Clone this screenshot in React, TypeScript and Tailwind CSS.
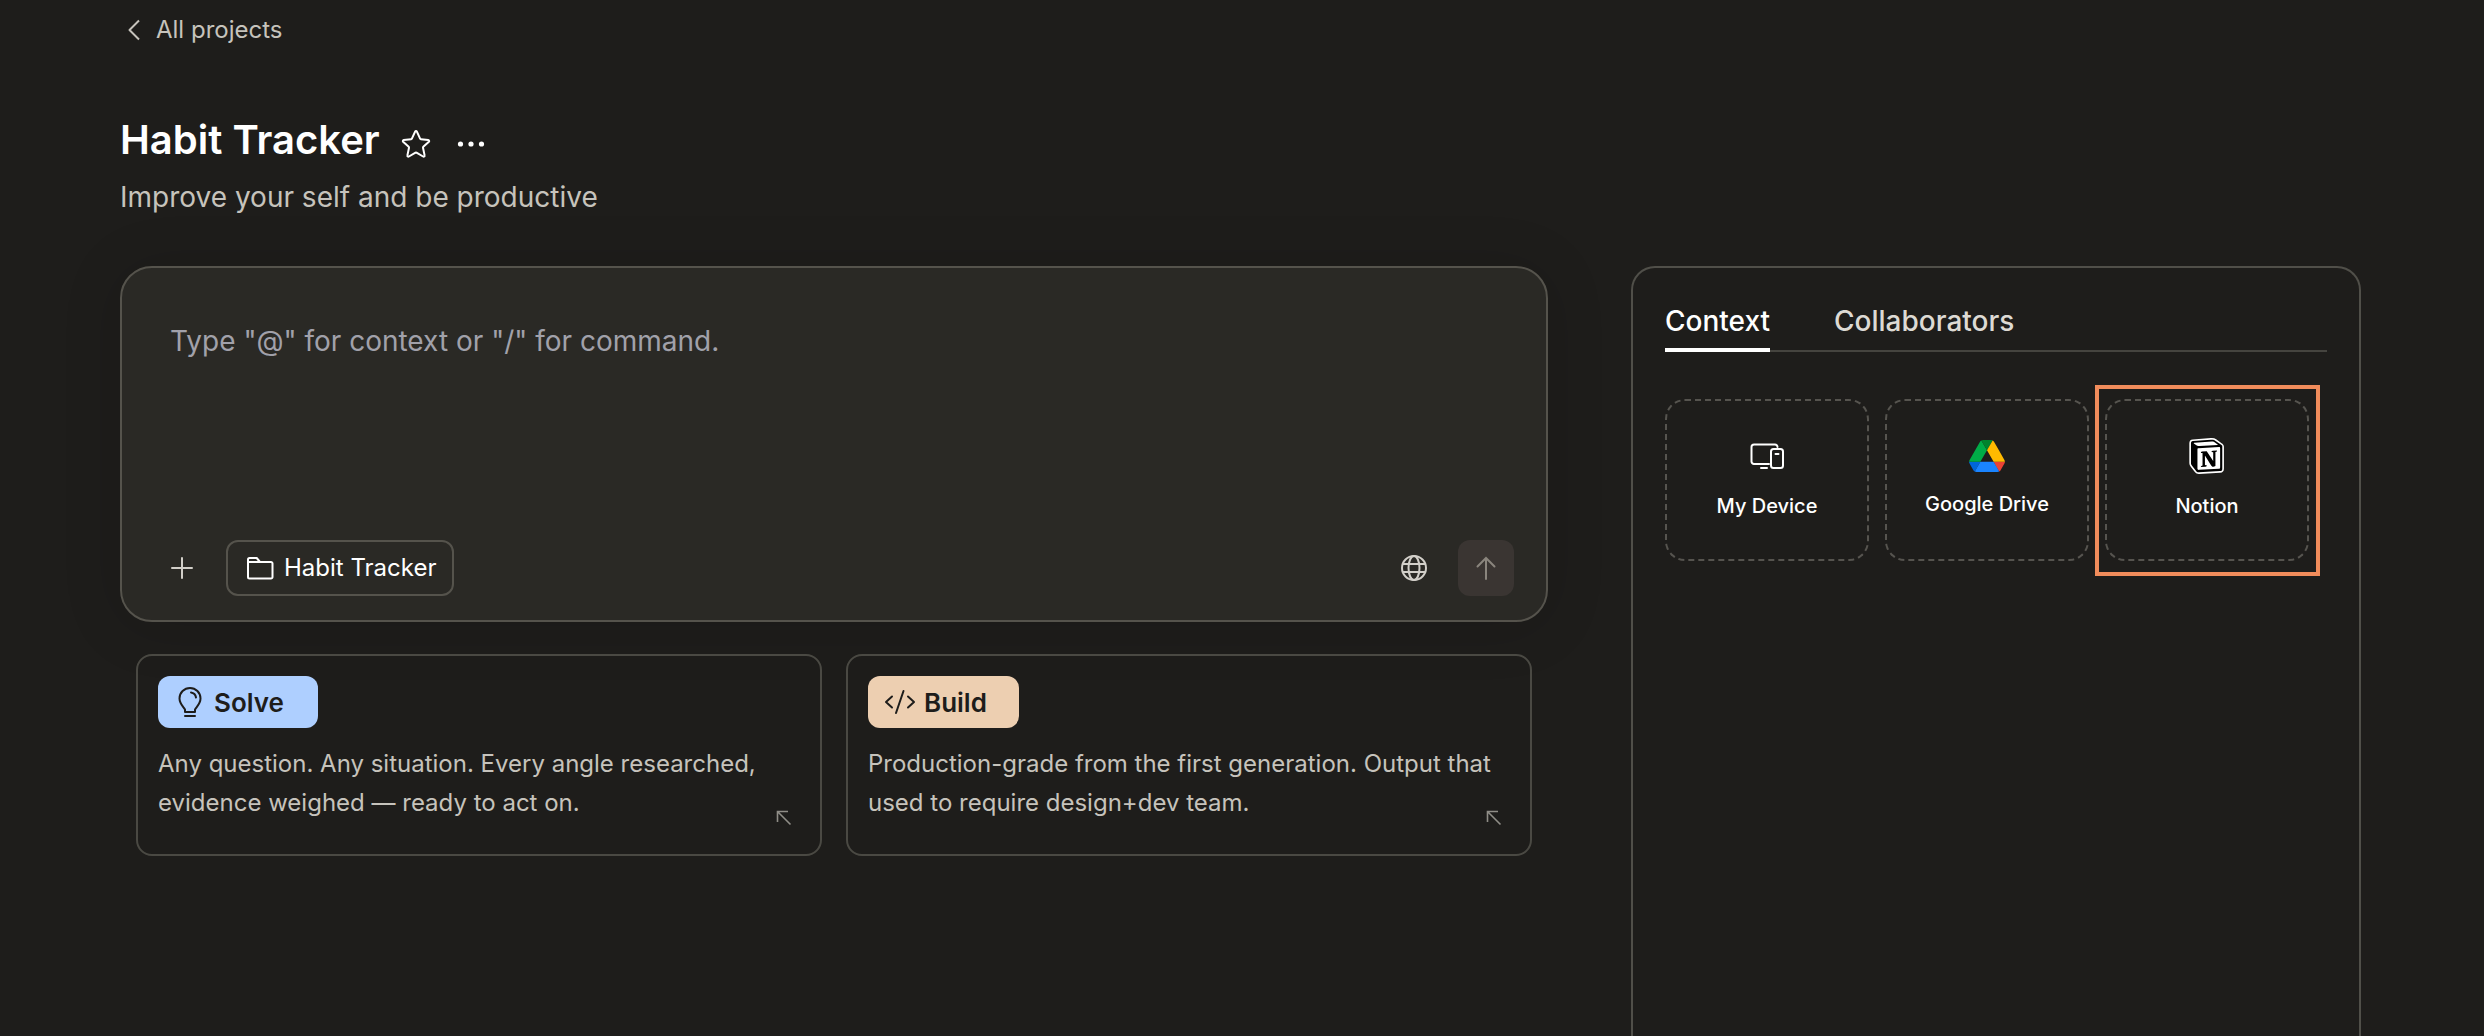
import React from "react";

type IconProps = { className?: string; children: React.ReactNode; box: string; width?: number };

function Line({ className, children, box, width = 2 }: IconProps) {
  return (
    <svg
      viewBox={box}
      className={className}
      fill="none"
      stroke="currentColor"
      strokeWidth={width}
      strokeLinecap="round"
      strokeLinejoin="round"
      aria-hidden="true"
    >
      {children}
    </svg>
  );
}

function ArrowUpLeft() {
  return (
    <Line box="0 0 16 16" width={1.6} className="size-4 text-[#8f8d87]">
      <path d="M1.500 12V1.500H12M1.500 1.500l13 13" strokeLinecap="butt" strokeLinejoin="miter" />
    </Line>
  );
}

function ModeCard({
  title,
  tone,
  icon,
  children,
}: {
  title: string;
  tone: string;
  icon: React.ReactNode;
  children: React.ReactNode;
}) {
  return (
    <button
      type="button"
      className="relative flex h-[202px] flex-col items-start rounded-2xl border-2 border-[#4a4943] p-5 text-left"
    >
      <span className={`flex h-13 items-center rounded-xl text-[26px] font-semibold text-[#1e1d1b] ${tone}`}>
        {icon}
        {title}
      </span>
      <span className="mt-4 text-2xl leading-[39px] text-[#c6c3bc]">{children}</span>
      <span className="absolute right-7 bottom-7">
        <ArrowUpLeft />
      </span>
    </button>
  );
}

function Source({ label, icon }: { label: string; icon: React.ReactNode }) {
  return (
    <button
      type="button"
      className="flex h-[162px] w-[204px] flex-col items-center justify-center gap-5 rounded-[20px] border-2 border-dashed border-[#56544f] pb-1 text-xl leading-6 font-medium text-white"
    >
      {icon}
      {label}
    </button>
  );
}

function DeviceIcon() {
  return (
    <Line box="0 0 36 36" className="size-9" width={2}>
      <path d="M20 26H5a2.500 2.500 0 0 1-2.500-2.500V9A2.500 2.500 0 0 1 5 6.500h21A2.500 2.500 0 0 1 28.500 9" />
      <rect x="22" y="11" width="12" height="19" rx="2.500" />
      <path d="M26.500 16h3M12 30h6" />
    </Line>
  );
}

function DriveIcon() {
  return (
    <svg viewBox="0 0 87.3 78" className="h-8 w-9" aria-hidden="true">
      <path d="m6.600 66.850 3.850 6.650c.8 1.400 1.950 2.500 3.300 3.300l13.750-23.800h-27.500c0 1.550.4 3.100 1.200 4.500z" fill="#0066da" />
      <path d="m43.650 25-13.750-23.800c-1.350.8-2.500 1.900-3.300 3.300l-25.400 44a9.060 9.060 0 0 0 -1.200 4.500h27.500z" fill="#00ac47" />
      <path d="m73.550 76.800c1.350-.8 2.500-1.900 3.300-3.300l1.600-2.750 7.650-13.250c.8-1.400 1.200-2.950 1.200-4.500h-27.502l5.852 11.500z" fill="#ea4335" />
      <path d="m43.650 25 13.750-23.800c-1.350-.8-2.900-1.200-4.500-1.200h-18.500c-1.600 0-3.150.45-4.500 1.200z" fill="#00832d" />
      <path d="m59.800 53h-32.300l-13.750 23.800c1.350.8 2.900 1.200 4.500 1.200h50.800c1.600 0 3.150-.45 4.500-1.200z" fill="#1a84ff" />
      <path d="m73.400 26.500-12.700-22c-.8-1.400-1.950-2.500-3.300-3.300l-13.750 23.800 16.150 28h27.450c0-1.550-.4-3.100-1.200-4.500z" fill="#ffba00" />
    </svg>
  );
}

function NotionIcon() {
  return (
    <svg viewBox="-5 -5 108 110" className="size-9" aria-hidden="true">
      <path
        fill="#fff"
        stroke="#fff"
        strokeWidth="10"
        d="M6.017 4.313l55.333-4.087c6.797-.583 8.543-.19 12.817 2.917l17.663 12.443c2.913 2.140 3.883 2.723 3.883 5.053v68.243c0 4.277-1.553 6.807-6.990 7.193L24.467 99.967c-4.080.193-6.023-.39-8.160-3.113L3.300 79.940c-2.333-3.113-3.300-5.443-3.300-8.167V11.113c0-3.497 1.553-6.413 6.017-6.800z"
      />
      <path
        fill="#000"
        fillRule="evenodd"
        d="M61.350.227l-55.333 4.087C1.553 4.700 0 7.617 0 11.113v60.660c0 2.723.967 5.053 3.300 8.167l13.007 16.913c2.137 2.723 4.080 3.307 8.160 3.113l64.257-3.890c5.433-.387 6.990-2.917 6.990-7.193V20.640c0-2.210-.873-2.847-3.443-4.733L74.167 3.143c-4.273-3.107-6.020-3.500-12.817-2.917zM25.920 19.523c-5.247.353-6.437.433-9.417-1.990L8.927 11.507c-.77-.78-.383-1.753 1.557-1.947l53.193-3.887c4.467-.39 6.793 1.167 8.540 2.527l9.123 6.610c.39.197 1.360 1.360.193 1.360l-54.933 3.307-.68.047zM19.803 88.300V30.367c0-2.530.777-3.697 3.103-3.893L86 22.780c2.140-.193 3.107 1.167 3.107 3.693v57.547c0 2.530-.39 4.670-3.883 4.863l-60.377 3.500c-3.493.193-5.043-.970-5.043-4.083zm59.600-54.827c.387 1.750 0 3.500-1.750 3.700l-2.910.577v42.773c-2.527 1.360-4.853 2.137-6.797 2.137-3.107 0-3.883-.973-6.210-3.887l-19.030-29.940v28.967l6.020 1.363s0 3.500-4.857 3.500l-13.390.777c-.39-.78 0-2.723 1.357-3.110l3.497-.970v-38.300L30.480 40.667c-.39-1.750.58-4.277 3.300-4.473l14.367-.967 19.800 30.327v-26.830l-5.047-.580c-.39-2.143 1.163-3.700 3.103-3.890l13.400-.780z"
      />
    </svg>
  );
}

export default function App() {
  return (
    <div className="flex min-h-screen flex-col overflow-hidden bg-[#1e1d1b] pr-[123px] pl-[120px] font-['Inter',sans-serif] text-white">
      <nav className="flex h-[60px] items-center pl-2">
        <a href="#projects" className="flex items-center gap-4 text-2xl text-[#c6c3bc]">
          <Line box="0 0 12 22" width={2} className="h-[22px] w-3">
            <path d="M11 1.500 1.500 11 11 20.500" strokeLinecap="butt" />
          </Line>
          All projects
        </a>
      </nav>

      <header className="mt-[52px]">
        <div className="flex items-center">
          <h1 className="text-[40px] leading-[56px] font-semibold">Habit Tracker</h1>
          <button type="button" aria-label="Favorite" className="mt-2 ml-[21px]">
            <Line box="0 0 30 30" width={2} className="size-[30px]">
              <path d="M14.100 2.600a1 1 0 0 1 1.800 0l3.200 7.100a1 1 0 0 0 .8.6l7.400.8a1 1 0 0 1 .6 1.700l-5.600 5a1 1 0 0 0-.3 1l1.600 7.600a1 1 0 0 1-1.500 1.100l-6.600-3.900a1 1 0 0 0-1 0l-6.600 3.900a1 1 0 0 1-1.500-1.100L8 18.800a1 1 0 0 0-.3-1l-5.600-5a1 1 0 0 1 .6-1.700l7.400-.8a1 1 0 0 0 .8-.6z" />
            </Line>
          </button>
          <button type="button" aria-label="More options" className="mt-2 ml-[26px]">
            <svg viewBox="0 0 28 8" className="h-2 w-7" fill="currentColor" aria-hidden="true">
              <circle cx="3.500" cy="4" r="2.600" />
              <circle cx="14" cy="4" r="2.600" />
              <circle cx="24.500" cy="4" r="2.600" />
            </svg>
          </button>
        </div>
        <p className="mt-[11px] text-[28px] leading-9 text-[#c6c3bc]">Improve your self and be productive</p>
      </header>

      <div className="mt-[51px] flex flex-1 gap-[83px]">
        <main className="flex min-w-0 flex-1 flex-col">
          <form className="flex h-[356px] flex-col rounded-[32px] border-2 border-[#55534c] bg-[#2a2925] shadow-[0_4px_60px_rgba(0,0,0,0.14)]">
            <textarea
              aria-label="Prompt"
              placeholder={'Type "@" for context or "/" for command.'}
              className="w-full flex-1 resize-none bg-transparent px-12 pt-[53px] text-[28px] leading-10 outline-none placeholder:text-[#a1a1aa]"
            />
            <div className="flex items-center px-8 pb-6">
              <button type="button" aria-label="Add" className="flex size-14 items-center justify-center text-[#d2cfc9]">
                <Line box="0 0 22 22" width={2} className="size-[22px]">
                  <path d="M11 1v20M1 11h20" />
                </Line>
              </button>
              <button
                type="button"
                className="ml-4 flex h-14 items-center gap-2.5 rounded-xl border-2 border-[#55534c] pr-4 pl-[18px] text-2xl"
              >
                <Line box="0 0 28 28" width={2} className="size-7">
                  <path d="M2 23V5.500A1.500 1.500 0 0 1 3.500 4h7.200L14 8h11a1.500 1.500 0 0 1 1.500 1.500V23a1.500 1.500 0 0 1-1.500 1.500H3.500A1.500 1.500 0 0 1 2 23zM2 8h12" />
                </Line>
                Habit Tracker
              </button>
              <button type="button" aria-label="Web search" className="mr-[30px] ml-auto text-[#d2cfc9]">
                <Line box="0 0 28 28" width={2} className="size-7">
                  <circle cx="14" cy="14" r="12" />
                  <ellipse cx="14" cy="14" rx="5.500" ry="12" />
                  <path d="M2.800 10h22.400M2.800 18h22.400" />
                </Line>
              </button>
              <button
                type="submit"
                aria-label="Send"
                className="flex size-14 items-center justify-center rounded-xl bg-[#3a3532] text-[#8a857d]"
              >
                <Line box="0 0 22 24" width={2} className="h-6 w-[22px]">
                  <path d="M11 23V2M2.500 10.500 11 2l8.500 8.500" strokeLinejoin="miter" />
                </Line>
              </button>
            </div>
          </form>

          <div className="mt-8 grid grid-cols-2 gap-6 px-4">
            <ModeCard
              title="Solve"
              tone="bg-[#aecfff] pr-[34px] pl-5 gap-3"
              icon={
                <Line box="0 0 24 32" width={2} className="h-8 w-6">
                  <path d="M7 26v-2.500C5 20.500 1.500 17.500 1.500 12.500a10.500 10.500 0 0 1 21 0c0 5-3.500 8-5.500 11V26zM7 30h10M13 6.500a6 6 0 0 1 5 5" />
                </Line>
              }
            >
              Any question. Any situation. Every angle researched, evidence weighed — ready to act on.
            </ModeCard>
            <ModeCard
              title="Build"
              tone="bg-[#edcfb1] pr-8 pl-4 gap-2"
              icon={
                <Line box="0 0 32 32" width={2} className="size-8">
                  <path d="M8 10.500 2 16l6 5.500M24 10.500l6 5.500-6 5.500M19.500 5l-7.500 22" />
                </Line>
              }
            >
              Production-grade from the first generation. Output that used to require design+dev team.
            </ModeCard>
          </div>
        </main>

        <aside className="w-[730px] shrink-0 rounded-t-3xl border-2 border-b-0 border-[#504f49] px-8 pt-8">
          <div role="tablist" className="flex h-[52px] gap-16 border-b-2 border-[#45443f] text-[28px] leading-[42px] font-medium">
            <button type="button" role="tab" aria-selected="true" className="-mb-0.5 flex border-b-4 border-white">
              Context
            </button>
            <button type="button" role="tab" aria-selected="false" className="flex text-[#dddad4]">
              Collaborators
            </button>
          </div>
          <div className="mt-[47px] flex gap-4">
            <Source label="My Device" icon={<DeviceIcon />} />
            <Source label="Google Drive" icon={<DriveIcon />} />
            <div className="relative">
              <Source label="Notion" icon={<NotionIcon />} />
              <div className="pointer-events-none absolute -top-[14px] -right-[11px] -bottom-[15px] -left-[10px] border-4 border-[#f18c5b]" />
            </div>
          </div>
        </aside>
      </div>
    </div>
  );
}
